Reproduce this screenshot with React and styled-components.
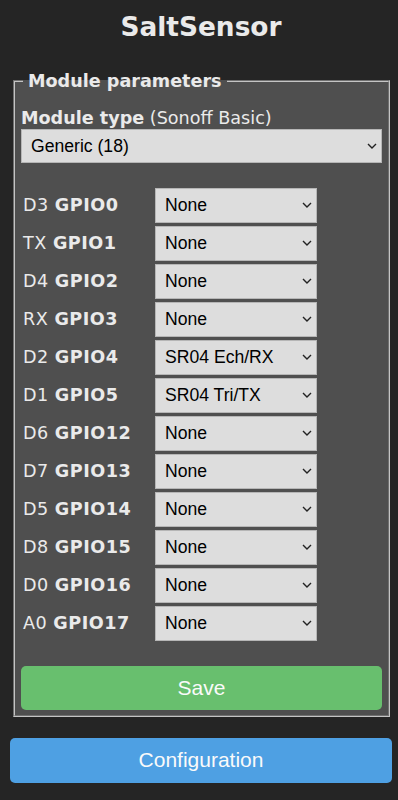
import React from "react";
import styled, { createGlobalStyle } from "styled-components";

const Global = createGlobalStyle`
  html, body {
    margin: 0;
    padding: 0;
    background: #252525;
  }
  body {
    font-family: "DejaVu Sans", Verdana, sans-serif;
    color: #eaeaea;
  }
`;

const Page = styled.div`
  width: 382px;
  margin-left: 10px;
  padding-top: 12px;
  padding-bottom: 17px;
`;

const Title = styled.h2`
  margin: 0 0 29px;
  text-align: center;
  font-size: 26.4px;
  line-height: 30px;
  font-weight: bold;
  color: #eaeaea;
`;

const Box = styled.fieldset`
  margin: 0 2px 0 3px;
  padding: 17px 6px 5.5px;
  background: #4f4f4f;
  border: 2px groove #c4c4c4;
  min-width: 0;
`;

const Legend = styled.legend`
  padding: 0 5px;
  margin-left: 2px;
  font-size: 17.6px;
  line-height: 20px;
  font-weight: bold;
`;

const TypeLabel = styled.div`
  font-size: 17.6px;
  line-height: 20px;
  margin-bottom: 0.5px;
`;

const SelectWrap = styled.div`
  position: relative;
  width: 100%;
  height: 34.5px;
`;

const Select = styled.select`
  appearance: none;
  -webkit-appearance: none;
  width: 100%;
  height: 100%;
  margin: 0;
  padding: 0 26px 0 9px;
  box-sizing: border-box;
  background: #dddddd;
  color: #000;
  border: 1.5px solid #b6b6b6;
  border-radius: 0;
  font-family: "Liberation Sans", Arial, sans-serif;
  font-size: 17.6px;
  outline: none;
`;

const Chevron = styled.svg`
  position: absolute;
  right: 5px;
  top: 50%;
  margin-top: -3px;
  pointer-events: none;
`;

const Pins = styled.div`
  display: grid;
  grid-template-columns: 134px 162px;
  row-gap: 3.5px;
  margin-top: 25px;
  align-items: center;
`;

const PinLabel = styled.div`
  padding-left: 2px;
  font-size: 17.6px;
  line-height: 20px;
  letter-spacing: 0.5px;
  white-space: nowrap;
  b {
    font-weight: bold;
  }
`;

const Button = styled.button`
  display: block;
  width: 100%;
  height: 44.3px;
  border: 0;
  border-radius: 5px;
  background: ${(p) => p.$bg};
  color: #fafafa;
  font-family: "Liberation Sans", Arial, sans-serif;
  font-size: 21px;
  line-height: 44px;
  padding: 0;
  margin-top: ${(p) => p.$top || "0"};
`;

const DropSelect = ({ value }) => (
  <SelectWrap>
    <Select defaultValue={value}>
      <option>{value}</option>
    </Select>
    <Chevron width="10" height="6" viewBox="0 0 10 6">
      <path d="M1 1 L5 5 L9 1" fill="none" stroke="#222" strokeWidth="1.4" />
    </Chevron>
  </SelectWrap>
);

const pins = [
  ["D3", "GPIO0", "None"],
  ["TX", "GPIO1", "None"],
  ["D4", "GPIO2", "None"],
  ["RX", "GPIO3", "None"],
  ["D2", "GPIO4", "SR04 Ech/RX"],
  ["D1", "GPIO5", "SR04 Tri/TX"],
  ["D6", "GPIO12", "None"],
  ["D7", "GPIO13", "None"],
  ["D5", "GPIO14", "None"],
  ["D8", "GPIO15", "None"],
  ["D0", "GPIO16", "None"],
  ["A0", "GPIO17", "None"],
];

export default function App() {
  return (
    <>
      <Global />
      <Page>
        <Title>SaltSensor</Title>
        <Box>
          <Legend>Module parameters</Legend>
          <TypeLabel>
            <b>Module type</b> (Sonoff Basic)
          </TypeLabel>
          <DropSelect value="Generic (18)" />
          <Pins>
            {pins.map(([d, g, v]) => (
              <React.Fragment key={g}>
                <PinLabel>
                  {d} <b>{g}</b>
                </PinLabel>
                <DropSelect value={v} />
              </React.Fragment>
            ))}
          </Pins>
          <Button $bg="#68bf6e" $top="25px">Save</Button>
        </Box>
        <Button $bg="#4ea0e3" $top="21px">Configuration</Button>
      </Page>
    </>
  );
}
